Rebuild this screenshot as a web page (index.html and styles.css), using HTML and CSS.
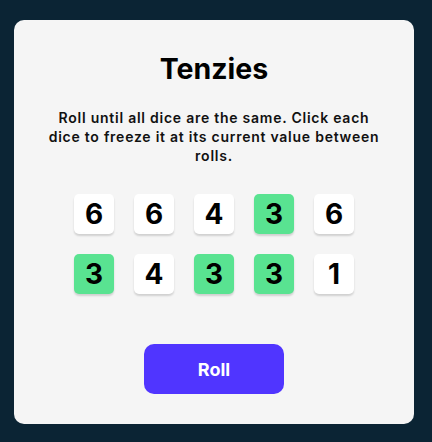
FILE: index.html
```html
<!DOCTYPE html>
<html>
<head>
<meta charset="utf-8">
<link rel="stylesheet" href="styles.css">
</head>
<body>
<main class="card">
  <h1 class="title">Tenzies</h1>
  <p class="instructions">Roll until all dice are the same. Click each dice to freeze it at its current value between rolls.</p>
  <div class="dice">
    <div class="die">6</div>
    <div class="die">6</div>
    <div class="die">4</div>
    <div class="die held">3</div>
    <div class="die">6</div>
    <div class="die held">3</div>
    <div class="die">4</div>
    <div class="die held">3</div>
    <div class="die held">3</div>
    <div class="die">1</div>
  </div>
  <button class="roll">Roll</button>
</main>
</body>
</html>
```
FILE: styles.css
```css
html, body {
  margin: 0;
  padding: 0;
  background: #0B2434;
}
body {
  padding: 20px 18px 18px 14px;
  font-family: "Inter", "Noto Sans", sans-serif;
}
.card {
  width: 400px;
  height: 404px;
  box-sizing: border-box;
  background: #F5F5F5;
  border-radius: 10px;
  display: flex;
  flex-direction: column;
  align-items: center;
  padding-top: 31px;
}
.title {
  margin: 0;
  font-size: 28.5px;
  line-height: 36px;
  font-weight: 700;
  color: #000;
  letter-spacing: 0;
}
.instructions {
  margin: 21px 0 0;
  width: 340px;
  text-align: center;
  font-size: 14px;
  line-height: 19px;
  font-weight: 600;
  color: #111;
  letter-spacing: 0.75px;
}
.dice {
  margin-top: 29px;
  display: grid;
  grid-template-columns: repeat(5, 40px);
  grid-auto-rows: 40px;
  gap: 20px;
}
.die {
  background: #FFFFFF;
  border-radius: 5px;
  box-shadow: 0 2px 2px rgba(0, 0, 0, 0.15);
  display: flex;
  align-items: center;
  justify-content: center;
  font-size: 28px;
  font-weight: 700;
  color: #000;
}
.die.held {
  background: #59E391;
}
.roll {
  margin-top: 50px;
  width: 140px;
  height: 50px;
  border: none;
  border-radius: 10px;
  background: #5035FF;
  color: #FFFFFF;
  font-family: inherit;
  font-size: 18px;
  font-weight: 700;
  cursor: pointer;
}
```
